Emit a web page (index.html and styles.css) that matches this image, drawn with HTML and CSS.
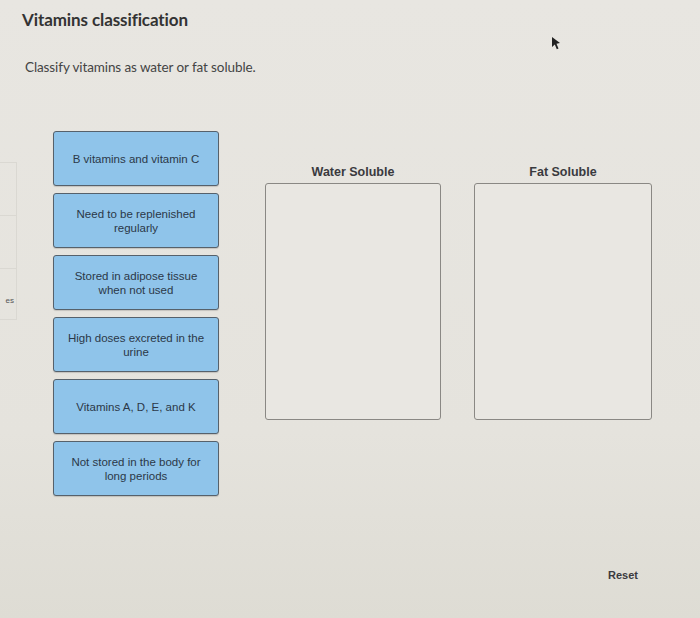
FILE: index.html
```html
<!DOCTYPE html>
<html>
<head>
<meta charset="utf-8">
<link rel="stylesheet" href="styles.css">
</head>
<body>
<div class="page">
  <header class="head">
    <h1 class="title">Vitamins classification</h1>
    <p class="prompt">Classify vitamins as water or fat soluble.</p>
  </header>
  <main class="work">
    <div class="stub">
      <div class="stub-cell"></div>
      <div class="stub-cell"></div>
      <div class="stub-cell stub-last">es</div>
    </div>
    <div class="cards">
      <div class="card">B vitamins and vitamin C</div>
      <div class="card">Need to be replenished<br>regularly</div>
      <div class="card">Stored in adipose tissue<br>when not used</div>
      <div class="card">High doses excreted in the<br>urine</div>
      <div class="card">Vitamins A, D, E, and K</div>
      <div class="card">Not stored in the body for<br>long periods</div>
    </div>
    <div class="bin bin-water">
      <div class="bin-label">Water Soluble</div>
      <div class="bin-box"></div>
    </div>
    <div class="bin bin-fat">
      <div class="bin-label">Fat Soluble</div>
      <div class="bin-box"></div>
    </div>
  </main>
  <footer class="foot">
    <span class="reset">Reset</span>
  </footer>
  <svg class="cursor" width="14" height="16" viewBox="0 0 14 16"><path d="M3 1 L11 7 L7.5 7.8 L9.5 12.5 L7.8 13.2 L5.8 8.6 L3 11 Z" fill="#222"/></svg>
</div>
</body>
</html>
```
FILE: styles.css
```css
html, body {
  margin: 0;
  padding: 0;
}
body {
  background: #e6e4de;
  width: 700px;
  height: 618px;
  overflow: hidden;
}
.page {
  position: relative;
  width: 700px;
  height: 618px;
  background: linear-gradient(180deg, #e8e6e1 0%, #e5e3dd 70%, #dedcd4 100%);
  display: flex;
  flex-direction: column;
}
.head {
  padding: 9px 0 0 22px;
}
.title {
  margin: 0;
  font-family: Lato, "Open Sans", sans-serif;
  font-weight: 700;
  font-size: 17px;
  letter-spacing: -0.1px;
  line-height: 22px;
  color: #333;
}
.prompt {
  margin: 27px 0 0 3px;
  font-family: Lato, "Open Sans", sans-serif;
  font-size: 13.5px;
  letter-spacing: -0.1px;
  line-height: 18px;
  color: #444;
}
.work {
  display: flex;
  align-items: flex-start;
  margin-top: 55px;
}
.stub {
  width: 17px;
  margin-top: 32px;
  display: flex;
  flex-direction: column;
}
.stub-cell {
  height: 52px;
  border: 1px solid #dad8d2;
  border-left: none;
  margin-top: -1px;
}
.stub-last {
  font-family: "Liberation Sans", Arial, sans-serif;
  font-size: 8px;
  color: #555;
  display: flex;
  align-items: flex-end;
  justify-content: flex-end;
  padding-bottom: 14px;
  box-sizing: border-box;
  padding-right: 2px;
}
.cards {
  margin-left: 36px;
  width: 166px;
  display: flex;
  flex-direction: column;
  gap: 7px;
}
.card {
  height: 55px;
  box-sizing: border-box;
  background: #8fc4ea;
  border: 1px solid #56616b;
  border-radius: 3px;
  box-shadow: 0 1px 1px rgba(0,0,0,0.15);
  display: flex;
  align-items: center;
  justify-content: center;
  text-align: center;
  font-family: "Liberation Sans", Arial, sans-serif;
  font-size: 11.5px;
  line-height: 14px;
  color: #2b3848;
  padding: 0 8px;
}
.bin {
  display: flex;
  flex-direction: column;
  align-items: center;
}
.bin-water {
  margin-left: 46px;
  width: 176px;
  margin-top: 33px;
}
.bin-fat {
  margin-left: 33px;
  width: 178px;
  margin-top: 33px;
}
.bin-label {
  font-family: "Liberation Sans", Arial, sans-serif;
  font-weight: 700;
  font-size: 12.5px;
  line-height: 16px;
  color: #3a3a3e;
  margin-bottom: 3px;
}
.bin-box {
  width: 100%;
  height: 237px;
  box-sizing: border-box;
  border: 1px solid #8a8884;
  border-radius: 3px;
  background: #e9e7e2;
}
.foot {
  margin-top: auto;
  display: flex;
  justify-content: flex-end;
  padding: 0 62px 37px 0;
}
.reset {
  font-family: "Liberation Sans", Arial, sans-serif;
  font-weight: 700;
  font-size: 11px;
  color: #3a3a3e;
}
.cursor {
  position: absolute;
  left: 549px;
  top: 36px;
}
```
